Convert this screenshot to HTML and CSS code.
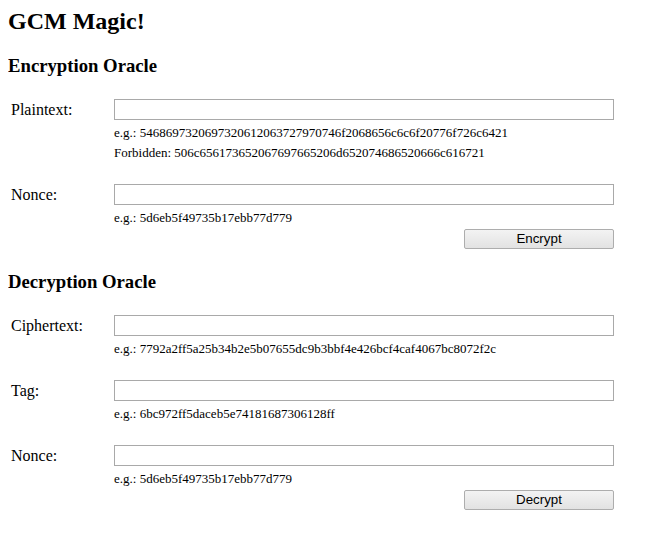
FILE: index.html
```html
<!DOCTYPE html>
<html>
<head>
<meta charset="utf-8">
<title>GCM Magic!</title>
<link rel="stylesheet" href="styles.css">
</head>
<body>
<h1 class="title">GCM Magic!</h1>

<section class="oracle">
  <h2 class="oracle-title">Encryption Oracle</h2>
  <div class="row">
    <label class="label">Plaintext:</label>
    <div class="field">
      <input class="text-input" type="text">
      <div class="hint">e.g.: 5468697320697320612063727970746f2068656c6c6f20776f726c6421</div>
      <div class="hint hint-last">Forbidden: 506c656173652067697665206d652074686520666c616721</div>
    </div>
  </div>
  <div class="row row-tight">
    <label class="label">Nonce:</label>
    <div class="field">
      <input class="text-input" type="text">
      <div class="hint">e.g.: 5d6eb5f49735b17ebb77d779</div>
      <div class="actions"><button class="btn" type="button">Encrypt</button></div>
    </div>
  </div>
</section>

<section class="oracle">
  <h2 class="oracle-title">Decryption Oracle</h2>
  <div class="row">
    <label class="label">Ciphertext:</label>
    <div class="field">
      <input class="text-input" type="text">
      <div class="hint">e.g.: 7792a2ff5a25b34b2e5b07655dc9b3bbf4e426bcf4caf4067bc8072f2c</div>
    </div>
  </div>
  <div class="row">
    <label class="label">Tag:</label>
    <div class="field">
      <input class="text-input" type="text">
      <div class="hint">e.g.: 6bc972ff5daceb5e74181687306128ff</div>
    </div>
  </div>
  <div class="row row-tight">
    <label class="label">Nonce:</label>
    <div class="field">
      <input class="text-input" type="text">
      <div class="hint">e.g.: 5d6eb5f49735b17ebb77d779</div>
      <div class="actions"><button class="btn" type="button">Decrypt</button></div>
    </div>
  </div>
</section>
</body>
</html>
```

FILE: styles.css
```css
html, body {
  background: #ffffff;
}
body {
  margin: 8px;
  font-family: "Liberation Serif", "Times New Roman", serif;
  font-size: 16px;
  color: #000000;
}
.title {
  font-size: 24px;
  font-weight: bold;
  margin: 0 0 20px 0;
  line-height: normal;
}
.oracle + .oracle {
  margin-top: 22px;
}
.oracle-title {
  font-size: 18.72px;
  font-weight: bold;
  margin: 0 0 22px 0;
  line-height: normal;
}
.row {
  display: grid;
  grid-template-columns: 106px 500px;
  align-items: start;
  margin-bottom: 20px;
}
.row-tight {
  margin-bottom: 0;
}
.label {
  padding-top: 2px;
  padding-left: 3px;
  font-size: 16px;
  line-height: normal;
}
.field {
  display: flex;
  flex-direction: column;
}
.text-input {
  box-sizing: border-box;
  width: 500px;
  height: 21px;
  margin: 0;
  padding: 1px 3px;
  border: 1px solid #a9a9a9;
  background: #ffffff;
  font-family: "Liberation Sans", Arial, sans-serif;
  font-size: 13px;
}
.hint {
  padding-top: 2px;
  font-size: 13px;
  line-height: 22px;
}
.hint-last {
  padding-top: 0;
  padding-bottom: 2px;
  line-height: 18px;
}
.actions {
  display: flex;
  justify-content: flex-end;
}
.btn {
  box-sizing: border-box;
  width: 150px;
  height: 20px;
  margin: 0;
  padding: 0;
  border: 1px solid #adadad;
  border-radius: 2px;
  background: linear-gradient(#f3f3f3, #e2e2e2);
  font-family: "Liberation Sans", Arial, sans-serif;
  font-size: 13.33px;
  color: #000000;
  line-height: 18px;
}
```
